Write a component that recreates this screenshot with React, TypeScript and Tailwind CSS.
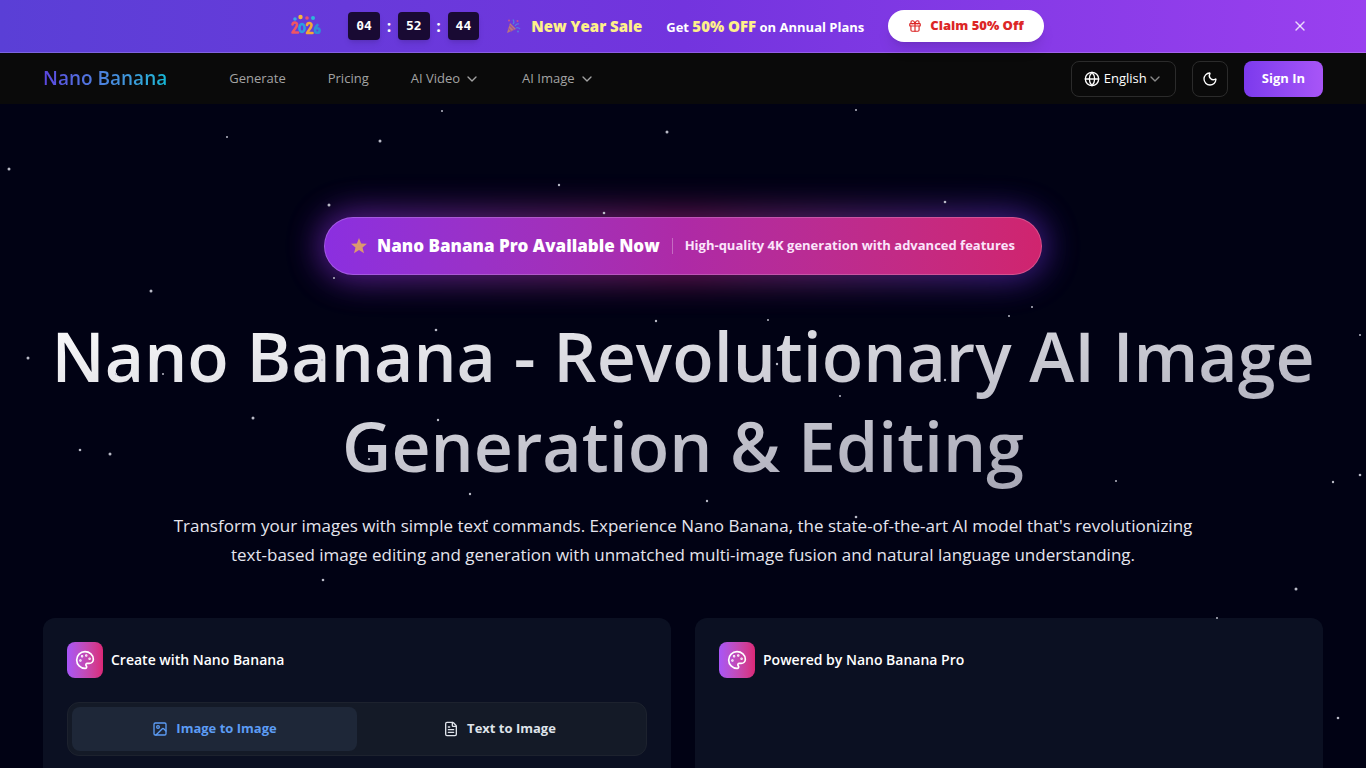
import { ChevronDown, FileText, Gift, Globe, Image, Moon, Palette, X } from "lucide-react";

const stars = [
  [227, 137, 1], [380, 141, 1.5], [442, 111, 1], [667, 132, 1.5], [856, 110, 1], [9, 169, 1.5], [559, 185, 1.2], [329, 205, 1.5],
  [945, 202, 1.3], [604, 213, 1.3], [334, 278, 1], [151, 291, 1.5], [1032, 307, 1], [1009, 316, 1], [656, 321, 1.2], [768, 320, 1],
  [436, 330, 1.3], [28, 358, 1.5], [116, 374, 1], [163, 374, 1], [322, 360, 1.2], [777, 364, 1.2], [945, 380, 1.2], [840, 396, 1],
  [253, 418, 1.5], [438, 420, 1.2], [80, 450, 1.3], [110, 454, 1.5], [369, 459, 1], [1116, 481, 1], [1333, 482, 1.2], [1360, 475, 1.3],
  [470, 494, 1.2], [707, 501, 1.2], [487, 521, 1.2], [856, 517, 1.3], [1155, 531, 1.2], [323, 580, 1.3], [1296, 589, 1.5],
  [1217, 618, 1], [1338, 718, 1.3], [1360, 335, 1],
];

const countdown = ["04", "52", "44"];

const StarField = () => (
  <svg className="pointer-events-none absolute inset-0 h-full w-full" aria-hidden="true">
    {stars.map(([x, y, r]) => (
      <circle key={`${x}-${y}`} cx={x} cy={y} r={r} fill="#b9bac6" />
    ))}
  </svg>
);

const NewYearLogo = () => (
  <svg className="h-6 w-8" viewBox="0 0 32 24" role="img" aria-label="2026">
    <circle cx="5" cy="5" r="1.8" fill="#38a9e8" />
    <circle cx="10.5" cy="3" r="2.2" fill="#f6b73c" />
    <circle cx="17" cy="4" r="1.8" fill="#ec4f70" />
    <circle cx="23" cy="4" r="2" fill="#2fb6d8" />
    <g fill="none" strokeWidth="2.6" strokeLinecap="round" strokeLinejoin="round">
      <path d="M2.500 10.500c.6-3 5-2.500 4.500.5C6.700 13.500 4 15.500 2.500 18.500H8" stroke="#ef5663" />
      <ellipse cx="12" cy="14" rx="2.600" ry="4" stroke="#2c9fe0" />
      <path d="M17 11c.6-3 5-2.500 4.500.5C21.200 14 18.500 16 17 19h5.500" stroke="#f5a63a" />
      <path d="M27.500 11c-2 1.600-2.700 3.500-2.500 5.600a2.300 2.300 0 1 0 2.300-2.400" stroke="#2e8fd6" />
    </g>
  </svg>
);

const PartyPopper = () => (
  <svg className="h-4 w-4 opacity-80" viewBox="0 0 16 16" aria-hidden="true">
    <path d="M2 15 5 5l6 6z" fill="#d08a62" />
    <path d="m3 10 3.500 3.500M4.300 7l5 5" stroke="#b05a8a" strokeWidth="1.200" />
    <path d="M8 6c1.500-1.500 1-3 0-4.500M10 8c1-2 2.500-2.500 4-2M11 10c1.500-.8 3 0 4 1" stroke="#4c8fe0" strokeWidth="1.300" fill="none" />
    <circle cx="4" cy="2.500" r="1" fill="#e0567c" />
    <circle cx="12.500" cy="3" r="1" fill="#e0567c" />
    <circle cx="13" cy="13.500" r="1" fill="#4c8fe0" />
  </svg>
);

const GoldStar = () => (
  <svg className="h-4 w-4" viewBox="0 0 16 16" aria-hidden="true">
    <path d="m8 0 2.100 5.400 5.900.4-4.500 3.700L13 15.200 8 12l-5 3.200 1.500-5.700L0 5.800l5.900-.4z" fill="#dc9a6e" />
  </svg>
);

const SaleBanner = () => (
  <div className="relative border-b border-white/20 bg-gradient-to-r from-[#5a3fd6] via-[#7334de] to-[#9a40ef]">
    <div className="flex h-13 items-center justify-center gap-6 pr-8 text-white">
      <NewYearLogo />
      <div className="mx-0.5 flex items-center gap-1">
        {countdown.map((value, i) => (
          <div key={i} className="flex items-center gap-1">
            {i > 0 && <span className="w-2.5 text-center text-base font-bold">:</span>}
            <span className="flex h-7 items-center justify-center rounded bg-[#190a33] px-2 font-['DejaVu_Sans_Mono',monospace] text-[13px] font-bold shadow-md">
              {value}
            </span>
          </div>
        ))}
      </div>
      <div className="flex items-center gap-2.5">
        <PartyPopper />
        <span className="text-[15px] font-extrabold text-[#fef08a]">New Year Sale</span>
      </div>
      <p className="text-[13px] font-bold">
        Get <span className="text-[15px] font-extrabold text-[#fef08a]">50% OFF</span> on Annual Plans
      </p>
      <button className="flex h-8 items-center gap-2 rounded-full bg-white px-5 text-[13px] font-extrabold text-[#dc2626] shadow-lg">
        <Gift size={14} />
        Claim 50% Off
      </button>
    </div>
    <button aria-label="Close" className="absolute top-4 right-14 p-0.5 text-white/80">
      <X size={16} />
    </button>
  </div>
);

const NavBar = () => (
  <header className="bg-[#0a0a0a]">
    <div className="mx-auto flex h-[51px] max-w-[1280px] items-center justify-between">
      <div className="flex items-center gap-[62px]">
        <a href="#" className="bg-gradient-to-r from-[#5b45e0] to-[#10b8d6] bg-clip-text text-[19px] font-semibold text-transparent">
          Nano Banana
        </a>
        <nav className="flex items-center gap-[42px] text-[13px] text-[#a3a3a3]">
          <a href="#">Generate</a>
          <a href="#">Pricing</a>
          <button className="flex items-center gap-1">
            AI Video
            <ChevronDown size={16} />
          </button>
          <button className="flex items-center gap-1">
            AI Image
            <ChevronDown size={16} />
          </button>
        </nav>
      </div>
      <div className="flex items-center gap-4 text-[13px] text-white">
        <button className="flex h-9 items-center rounded-lg border border-[#2b2b2b] px-3 font-medium">
          <Globe size={16} className="mr-1" />
          English
          <ChevronDown size={16} className="text-[#8a8a8a]" />
        </button>
        <button aria-label="Toggle theme" className="flex h-9 w-9 items-center justify-center rounded-lg border border-[#2b2b2b]">
          <Moon size={16} />
        </button>
        <button className="h-9 rounded-lg bg-gradient-to-r from-[#7c3aed] to-[#a855f7] px-[18px] font-bold">Sign In</button>
      </div>
    </div>
  </header>
);

const CardTitle = ({ title }: { title: string }) => (
  <div className="flex items-center gap-2">
    <div className="flex h-9 w-9 items-center justify-center rounded-lg bg-gradient-to-r from-[#a855f7] to-[#db2777] text-white">
      <Palette size={20} />
    </div>
    <h2 className="text-sm font-semibold text-white">{title}</h2>
  </div>
);

const App = () => {
  return (
    <div className="relative h-screen overflow-hidden bg-[#010214] font-['Open_Sans','Noto_Sans',sans-serif]">
      <SaleBanner />
      <NavBar />
      <main className="mx-auto max-w-[1280px] pt-[113px]">
        <div className="flex justify-center">
          <div className="relative">
            <div className="absolute -inset-1 rounded-full bg-gradient-to-r from-[#7c22ce] via-[#b0103c] to-[#4322b8] opacity-50 blur-lg" />
            <a
              href="#"
              className="relative flex h-[58px] items-center gap-3 rounded-full border border-white/20 bg-gradient-to-r from-[#8b2fe0] via-[#ae2aa6] to-[#d0246e] bg-origin-border px-[26px] text-white shadow-[0_0_40px_rgba(147,51,234,0.3)]"
            >
              <div className="flex items-center gap-2.5">
                <GoldStar />
                <span className="text-[17px] font-extrabold">Nano Banana Pro Available Now</span>
              </div>
              <span className="h-4 w-px bg-white/30" />
              <span className="text-[13px] font-bold text-[#fbe4fb]">High-quality 4K generation with advanced features</span>
            </a>
          </div>
        </div>
        <h1 className="mt-8 bg-gradient-to-br from-white to-[#9c9cac] bg-clip-text pt-1 text-center text-[68px] leading-[90px] font-semibold text-transparent">
          Nano Banana - Revolutionary AI Image Generation &amp; Editing
        </h1>
        <p className="mx-auto mt-5 max-w-[1050px] text-center text-[17px] leading-[29px] text-[#e5e5ee]">
          Transform your images with simple text commands. Experience Nano Banana, the state-of-the-art AI model that's
          revolutionizing text-based image editing and generation with unmatched multi-image fusion and natural language
          understanding.
        </p>
        <div className="mt-[49px] grid grid-cols-2 gap-6">
          <section className="min-h-80 rounded-xl bg-[#0b1022] p-6">
            <CardTitle title="Create with Nano Banana" />
            <div className="mt-6 grid grid-cols-2 rounded-xl border border-[#1d222e] bg-[#141a27] p-1 text-[13px] font-bold">
              <button className="flex h-11 items-center justify-center gap-2 rounded-lg bg-[#1e2738] text-[#5c9cf5]">
                <Image size={16} />
                Image to Image
              </button>
              <button className="flex h-11 items-center justify-center gap-2 rounded-lg text-[#dfe3ea]">
                <FileText size={16} />
                Text to Image
              </button>
            </div>
          </section>
          <section className="min-h-80 rounded-xl bg-[#0b1022] p-6">
            <CardTitle title="Powered by Nano Banana Pro" />
          </section>
        </div>
      </main>
      <StarField />
    </div>
  );
};

export default App;
